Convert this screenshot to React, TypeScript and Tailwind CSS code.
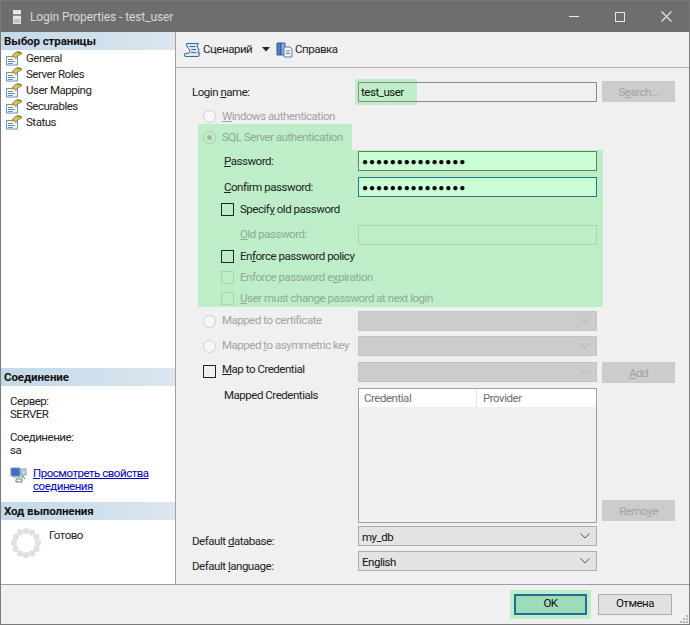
import React from "react";

const font = "font-['Roboto',sans-serif]";

function PageIcon() {
  return (
    <svg width="18" height="15" viewBox="0 0 18 15" className="shrink-0">
      <path d="M1.5 5.5H12.5V14H1.5Z" fill="#f4f6fa" stroke="#6d8fb8" />
      <path d="M3 8.5H8M3 10.5H10M3 12.5H8" stroke="#6d8fb8" />
      <path d="M7 5L11 1H15L16.5 3L13 4.5L11 7.5L9 6Z" fill="#d8c24a" stroke="#7d6f1e" strokeWidth="0.7" />
      <path d="M12 1L17 2" stroke="#4a6b3a" strokeWidth="0.8" />
    </svg>
  );
}

function Section({ children }: { children: React.ReactNode }) {
  return (
    <div className="h-[18px] shrink-0 flex items-center pl-[3px] pt-[2px] bg-gradient-to-r from-[#c3d9e9] to-[#dbe6f0] text-[11.5px] tracking-[-0.1px] font-bold text-[#111] leading-none">
      {children}
    </div>
  );
}

function Radio({ checked = false, tint = false }: { checked?: boolean; tint?: boolean }) {
  return (
    <span className={`w-[13px] h-[13px] rounded-full border shrink-0 flex items-center justify-center ${tint ? "border-[#a9cfb3] bg-[#c5eccb]" : "border-[#cfcfcf] bg-[#f7f7f7]"}`}>
      {checked && <span className="w-[5px] h-[5px] rounded-full bg-[#9fb8a6]" />}
    </span>
  );
}

function Check({ disabled = false }: { disabled?: boolean }) {
  return <span className={`w-[13px] h-[13px] border shrink-0 ${disabled ? "border-[#a8d4b2]" : "border-[#222]"}`} />;
}

function Combo({ value, disabled = false }: { value?: string; disabled?: boolean }) {
  return (
    <div className={`w-[239px] h-[20px] shrink-0 border flex items-center justify-between pl-[3px] pr-[6px] ${disabled ? "bg-[#cccccc] border-[#c4c4c4]" : "bg-[#e3e3e3] border-[#adadad] text-[#111]"}`}>
      <span className="translate-y-[2px]">{value}</span>
      <svg width="10" height="6" viewBox="0 0 10 6"><path d="M0.5 0.5L5 5L9.5 0.5" fill="none" stroke={disabled ? "#b4b4b4" : "#555"} /></svg>
    </div>
  );
}

function Btn({ label, className = "" }: { label: React.ReactNode; className?: string }) {
  return (
    <div className={`w-[73px] h-[21px] shrink-0 flex items-center justify-center pt-[2px] bg-[#cccccc] text-[#a2a2a2] ${className}`}>
      {label}
    </div>
  );
}

function Spinner() {
  const dots = Array.from({ length: 12 }, (_, i) => (i * Math.PI * 2) / 12);
  return (
    <svg width="30" height="30" viewBox="0 0 30 30" className="shrink-0">
      {dots.map((a, i) => (
        <rect key={i} x={15 + 12 * Math.cos(a) - 3} y={15 + 12 * Math.sin(a) - 3} width="6" height="6" rx="2" fill="#e0e0e0" />
      ))}
    </svg>
  );
}

const pages = ["General", "Server Roles", "User Mapping", "Securables", "Status"];

export default function App() {
  return (
    <div className={`${font} relative w-[690px] h-[625px] flex flex-col bg-[#f0f0f0] border border-[#7a7a7a] text-[11.5px] tracking-[-0.47px] text-[#222] overflow-hidden`}>
      {/* title bar */}
      <div className="h-[31px] shrink-0 bg-[#6e6e6e] flex items-center text-[#d8d8d8]">
        <svg width="10" height="16" viewBox="0 0 10 16" className="ml-[11px] mr-[8px]">
          <path d="M1 1H9V15H1Z" fill="#e6e6e6" />
          <path d="M1 5H9V7H1Z" fill="#8a8f96" />
          <path d="M2 10H8V14H2Z" fill="#b9c4d2" />
        </svg>
        <span className="text-[12px] tracking-[-0.1px]">Login Properties - test_user</span>
        <div className="ml-auto flex items-center">
          <div className="w-[46px] h-[30px] flex items-center justify-center">
            <div className="w-[10px] h-px bg-[#e8e8e8]" />
          </div>
          <div className="w-[46px] h-[30px] flex items-center justify-center">
            <div className="w-[10px] h-[10px] border border-[#e8e8e8]" />
          </div>
          <div className="w-[46px] h-[30px] flex items-center justify-center">
            <svg width="11" height="11" viewBox="0 0 11 11"><path d="M0.5 0.5L10.5 10.5M10.5 0.5L0.5 10.5" stroke="#e8e8e8" strokeWidth="1.1" /></svg>
          </div>
        </div>
      </div>

      {/* body */}
      <div className="flex h-[553px] shrink-0 border-b border-[#a0a0a0]">
        {/* left */}
        <div className="w-[175px] shrink-0 bg-white border-r border-[#a0a0a0] flex flex-col">
          <Section>Выбор страницы</Section>
          <div className="pl-[4px] h-[318px] shrink-0 text-[#222]">
            {pages.map((p) => (
              <div key={p} className="h-[16px] flex items-center gap-[3px]">
                <PageIcon />
                <span className="pt-[2px]">{p}</span>
              </div>
            ))}
          </div>
          <Section>Соединение</Section>
          <div className="pl-[9px] pt-[9px] h-[116px] shrink-0 leading-[13px] text-[#222]">
            <div>Сервер:</div>
            <div>SERVER</div>
            <div className="mt-[10px]">Соединение:</div>
            <div>sa</div>
            <div className="flex mt-[10px]">
              <svg width="17" height="16" viewBox="0 0 17 16" className="mr-[6px] shrink-0">
                <path d="M1 1H10V9H1Z" fill="#3f6fc4" stroke="#7a93c0" />
                <path d="M3 10H13" stroke="#7a93c0" />
                <path d="M11 2H16V8H11Z" fill="#c5d3e8" stroke="#8a9ab0" />
                <path d="M6 12H12V15H6Z" fill="none" stroke="#3f9a48" />
                <path d="M12 8L15 12" stroke="#3f9a48" />
              </svg>
              <div className="text-[#0000cc] underline leading-[13px]">Просмотреть свойства соединения</div>
            </div>
          </div>
          <Section>Ход выполнения</Section>
          <div className="flex pl-[10px] pt-[8px]">
            <Spinner />
            <span className="ml-[8px] -mt-[1px]">Готово</span>
          </div>
        </div>

        {/* right */}
        <div className="flex-1 flex flex-col">
          <div className="h-[36px] shrink-0 border-b border-[#b0b0b0] flex items-center pl-[7px]">
            <svg width="18" height="16" viewBox="0 0 18 16">
              <path d="M3.5 1.5H15.5L14 4L16 8L15 11H17L15.5 14.5H2L1 12L6 11L7 8L4 5Z" fill="#dbe4ef" stroke="#3f6a9c" strokeLinejoin="round" />
              <path d="M6.5 4.5H12.5M8.5 7.5H13M8 10.5H13" stroke="#3f6a9c" />
            </svg>
            <span className="ml-[2px] w-[59px] text-[#222]">Сценарий</span>
            <svg width="8" height="5" viewBox="0 0 8 5"><path d="M0 0H8L4 4.5Z" fill="#222" /></svg>
            <svg width="17" height="17" viewBox="0 0 17 17" className="ml-[6px]">
              <path d="M1 2H5V14H1Z" fill="#4d7fc0" stroke="#2f5d9c" />
              <path d="M5 2H9V14H5Z" fill="#8fb2de" stroke="#2f5d9c" />
              <path d="M8 6H14L16 8V16H8Z" fill="#f2f5fa" stroke="#5b7fa8" />
              <path d="M10 10H14M10 12.5H14" stroke="#5b7fa8" />
            </svg>
            <span className="ml-[2px] text-[#222]">Справка</span>
          </div>

          <div className="flex-1 pl-[16px]">
            {/* login name */}
            <div className="mt-[13px] h-[21px] flex items-center">
              <span className="w-[166px] pt-[3px]">Login <u>n</u>ame:</span>
              <div className="relative w-[239px] h-[20px] shrink-0">
                <div className="absolute -left-[3px] -top-[3px] w-[62px] h-[26px] bg-[#bdeec8]" />
                <div className="absolute inset-0 border border-[#8a8a8a] flex items-center pl-[2px] pt-[3px] text-[#111]">test_user</div>
              </div>
              <Btn label={<span>S<u>e</u>arch...</span>} className="ml-[5px]" />
            </div>

            {/* windows auth */}
            <div className="mt-[6px] -mb-[1px] h-[17px] flex items-center pl-[11px] gap-[6px] text-[#a3a3a3]">
              <Radio />
              <span><u>W</u>indows authentication</span>
            </div>

            {/* green group */}
            <div className="ml-[6px]">
              <div className="w-[154px] h-[26px] bg-[#bdeec8] flex items-center pl-[5px] gap-[6px] text-[#8fa996]">
                <Radio checked tint />
                <span className="whitespace-nowrap pt-[2px]">SQL Server authentication</span>
              </div>
              <div className="w-[405px] h-[157px] bg-[#bdeec8] flex flex-col">
                <div className="h-[20px] mt-px flex items-center pl-[26px]">
                  <span className="w-[134px] pt-[2px]"><u>P</u>assword:</span>
                  <div className="w-[239px] h-[20px] bg-[#caffd5] border border-[#5d7f66] flex items-center pl-[3px] text-[10px] tracking-[0.9px] text-black">●●●●●●●●●●●●●●●</div>
                </div>
                <div className="h-[20px] mt-[6px] flex items-center pl-[26px]">
                  <span className="w-[134px] pt-[2px]"><u>C</u>onfirm password:</span>
                  <div className="w-[239px] h-[20px] bg-[#caffd5] border border-[#1f7a8c] flex items-center pl-[3px] text-[10px] tracking-[0.9px] text-black">●●●●●●●●●●●●●●●</div>
                </div>
                <div className="h-[16px] mt-[4px] flex items-center pl-[23px] gap-[6px] text-[#222]">
                  <Check /><span className="pt-[2px]">Specif<u>y</u> old password</span>
                </div>
                <div className="h-[20px] mt-[8px] flex items-center pl-[42px] text-[#8fa996]">
                  <span className="w-[118px]"><u>O</u>ld password:</span>
                  <div className="w-[239px] h-[20px] border border-[#a8d4b2]" />
                </div>
                <div className="h-[16px] mt-[3px] flex items-center pl-[23px] gap-[6px] text-[#222]">
                  <Check /><span className="pt-[2px]">En<u>f</u>orce password policy</span>
                </div>
                <div className="h-[16px] mt-[5px] flex items-center pl-[23px] gap-[6px] text-[#8fa996]">
                  <Check disabled /><span className="pt-[2px]">Enforce password e<u>x</u>piration</span>
                </div>
                <div className="h-[16px] mt-[5px] flex items-center pl-[23px] gap-[6px] text-[#8fa996]">
                  <Check disabled /><span className="pt-[2px]"><u>U</u>ser must change password at next login</span>
                </div>
              </div>
            </div>

            {/* mapped */}
            <div className="mt-[4px] h-[20px] flex items-center pl-[11px] text-[#a3a3a3]">
              <Radio />
              <span className="ml-[6px] w-[136px] whitespace-nowrap -mt-[1px]">Mapped to certificate</span>
              <Combo disabled />
            </div>
            <div className="mt-[5px] h-[20px] flex items-center pl-[11px] text-[#a3a3a3]">
              <Radio />
              <span className="ml-[6px] w-[136px] whitespace-nowrap">Mapped <u>t</u>o asymmetric key</span>
              <Combo disabled />
            </div>
            <div className="mt-[5px] h-[21px] flex items-center pl-[11px] text-[#222]">
              <Check />
              <span className="ml-[6px] w-[136px] whitespace-nowrap -mt-[3px]"><u>M</u>ap to Credential</span>
              <Combo disabled />
              <Btn label={<span><u>A</u>dd</span>} className="ml-[5px] mt-[2px]" />
            </div>

            {/* credentials */}
            <div className="mt-[6px] flex items-start">
              <span className="w-[166px] pl-[32px] -mt-[1px]">Mapped Credentials</span>
              <div className="w-[239px] h-[135px] border border-[#a0a0a0] shrink-0">
                <div className="h-[18px] bg-white flex items-center text-[#6d6d6d]">
                  <span className="w-[118px] pl-[5px] pt-[2px] border-r border-[#e5e5e5] h-full flex items-center">Credential</span>
                  <span className="pl-[6px] pt-[2px]">Provider</span>
                </div>
              </div>
              <Btn label={<span>Remo<u>v</u>e</span>} className="ml-[5px] mt-[112px]" />
            </div>

            {/* defaults */}
            <div className="mt-[3px] h-[20px] flex items-end">
              <span className="w-[166px] translate-y-[4px]">Default <u>d</u>atabase:</span>
              <Combo value="my_db" />
            </div>
            <div className="mt-[5px] h-[20px] flex items-end">
              <span className="w-[166px] translate-y-[4px]">Default <u>l</u>anguage:</span>
              <Combo value="English" />
            </div>
          </div>
        </div>
      </div>

      {/* footer */}
      <div className="flex-1 flex items-center justify-end pr-[17px] pb-[1px]">
        <div className="p-[4px] bg-[#bdeec8]">
          <div className="w-[73px] h-[21px] bg-[#9ddcb8] border-2 border-[#1f6f9c] flex items-center justify-center text-[#111]">OK</div>
        </div>
        <div className="ml-[7px] w-[74px] h-[21px] bg-[#e1e1e1] border border-[#adadad] flex items-center justify-center text-[#111]">Отмена</div>
      </div>
      {/* resize grip */}
      <svg width="8" height="8" viewBox="0 0 8 8" className="absolute right-[1px] bottom-[1px]">
        <path d="M6 0H8V2H6ZM3 3H5V5H3ZM6 3H8V5H6ZM0 6H2V8H0ZM3 6H5V8H3ZM6 6H8V8H6Z" fill="#b8b8b8" />
      </svg>
    </div>
  );
}
